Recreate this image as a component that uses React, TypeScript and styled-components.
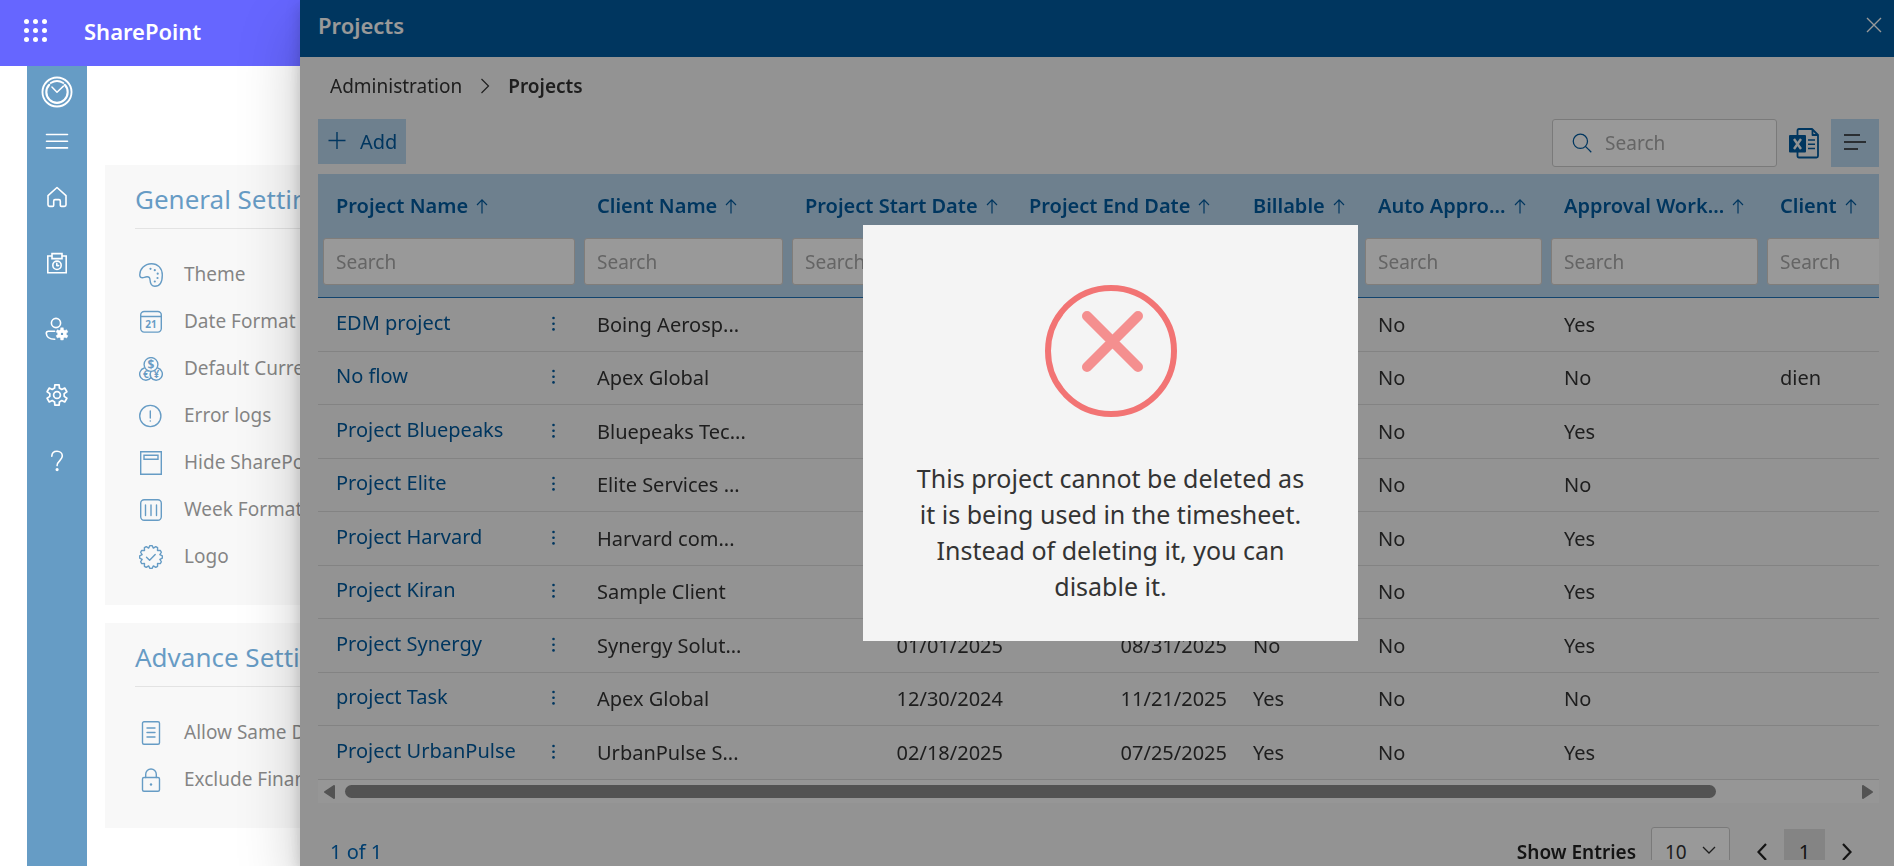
import React, { useState } from "react";
import styled, { createGlobalStyle } from "styled-components";

const blue = "#005a9e";
const paleBlue = "#b8d5ed";

const GlobalStyle = createGlobalStyle`
  *, *::before, *::after { box-sizing: border-box; }
  body {
    margin: 0;
    background: #fff;
    color: #333;
    font-family: "Noto Sans", "Open Sans", sans-serif;
    font-size: 20px;
    line-height: 26px;
    overflow: hidden;
  }
  button, input, select { font: inherit; color: inherit; }
  a { color: inherit; text-decoration: none; }
  h1, h2, p, ul { margin: 0; padding: 0; }
  ul { list-style: none; }
`;

/* ---------- icon helpers ---------- */

const gearPath = (cx: number, cy: number, outer: number, inner: number, teeth: number) => {
  const points: string[] = [];
  const step = (Math.PI * 2) / teeth;
  for (let i = 0; i < teeth; i++) {
    const a = i * step - Math.PI / 2;
    const corners: [number, number][] = [
      [inner, a - step * 0.32],
      [outer, a - step * 0.2],
      [outer, a + step * 0.2],
      [inner, a + step * 0.32],
    ];
    corners.forEach(([r, t]) =>
      points.push(`${(cx + r * Math.cos(t)).toFixed(2)} ${(cy + r * Math.sin(t)).toFixed(2)}`)
    );
  }
  return `M${points.join("L")}Z`;
};

const sealPath = (cx: number, cy: number, outer: number, inner: number, lobes: number) => {
  const at = (r: number, t: number) =>
    `${(cx + r * Math.cos(t)).toFixed(2)} ${(cy + r * Math.sin(t)).toFixed(2)}`;
  const step = (Math.PI * 2) / lobes;
  let d = `M${at(inner, -Math.PI / 2 - step / 2)}`;
  for (let i = 0; i < lobes; i++) {
    const a = i * step - Math.PI / 2;
    d += `L${at(outer, a - step * 0.18)}L${at(outer, a + step * 0.18)}L${at(inner, a + step / 2)}`;
  }
  return `${d}Z`;
};

type IconProps = { size?: number; stroke?: number; children: React.ReactNode };

const Svg = ({ size = 24, stroke = 1.4, children }: IconProps) => (
  <svg
    width={size}
    height={size}
    viewBox="0 0 24 24"
    fill="none"
    stroke="currentColor"
    strokeWidth={stroke}
    strokeLinecap="round"
    strokeLinejoin="round"
    aria-hidden="true"
  >
    {children}
  </svg>
);

const icons = {
  clock: (
    <Svg size={32}>
      <circle cx="12" cy="12" r="10.9" strokeWidth="1.4" />
      <path d="M6.2 6.6a8 8 0 1 0 11.6 0" strokeWidth="1.6" />
      <path d="M7.3 5.3a8.6 8.6 0 0 1 9.4 0" strokeWidth="1.4" />
      <path d="M8.2 8.2 12 12.2l4.8-4.6" strokeWidth="1.1" />
    </Svg>
  ),
  menu: (
    <Svg stroke={1.6}>
      <path d="M1.5 5.5h21M1.5 12.2h21M1.5 18.9h21" />
    </Svg>
  ),
  home: (
    <Svg stroke={1.6}>
      <path d="M3 10.6 12 2.5l9 8.1v9.2c0 1-.6 1.6-1.6 1.6h-3c-.7 0-1.1-.4-1.1-1.1v-4.4c0-.8-.5-1.3-1.3-1.3h-4c-.8 0-1.3.5-1.3 1.3v4.4c0 .7-.4 1.1-1.1 1.1h-3c-1 0-1.6-.6-1.6-1.6z" />
    </Svg>
  ),
  timesheet: (
    <Svg stroke={1.6}>
      <path d="M6.6 5H2.8v16.8h18.400V5h-3.800" strokeLinejoin="miter" />
      <path d="M7 2.600h10v5H7z" strokeLinejoin="miter" />
      <circle cx="12" cy="14.300" r="4.200" />
      <path d="M11.800 12.400v2.200h1.800" />
    </Svg>
  ),
  userSettings: (
    <Svg stroke={1.6}>
      <circle cx="11" cy="6" r="4.600" />
      <path d="M9.600 14.300H3.400c-1.400 0-2.200.9-2.100 2.200.3 3.600 3.400 5.700 8.400 5.700" />
      <path d={gearPath(17, 16.9, 6.2, 4.4, 6)} fill="currentColor" strokeWidth="0.500" />
      <circle cx="17" cy="16.900" r="1.200" fill="#005a9e" stroke="none" />
    </Svg>
  ),
  gear: (
    <Svg stroke={1.7}>
      <path d={gearPath(12, 12, 10.4, 7.3, 6)} />
      <circle cx="12" cy="12" r="3.400" />
    </Svg>
  ),
  help: (
    <Svg stroke={1.6}>
      <path d="M6.800 7.200C6.900 4.200 9 2.300 12 2.300s5.300 1.900 5.300 4.800c0 4.300-5.200 4.700-5.200 9.500" />
      <circle cx="12.100" cy="20.600" r=".8" fill="currentColor" />
    </Svg>
  ),
  palette: (
    <Svg>
      <path d="M.8 12.500C.4 6.500 5.500.7 12.500.7 19 .7 23.300 5.400 23.300 12c0 6.500-2.300 11.300-7.400 11.300-4.200 0-4.700-3.200-4.900-6.600-.1-2.200-1.200-3-3-2.900-2.300.1-3 .900-4.500.900-1.700 0-2.600-.8-2.700-2.200z" />
      <g fill="currentColor" stroke="none">
        <circle cx="11.500" cy="5.800" r="1.100" />
        <circle cx="15.800" cy="7.200" r="1.100" />
        <circle cx="18.700" cy="10.700" r="1.100" />
        <circle cx="18.500" cy="15" r="1.100" />
        <circle cx="15.800" cy="18.500" r="1.100" />
      </g>
    </Svg>
  ),
  calendar: (
    <Svg>
      <rect x="1.700" y="1.500" width="20.600" height="20.600" rx="3.500" />
      <path d="M1.700 6.500h20.600" />
      <text x="12" y="18" fontSize="10" fontWeight="700" textAnchor="middle" fill="currentColor" stroke="none">
        21
      </text>
    </Svg>
  ),
  currency: (
    <Svg>
      <circle cx="12" cy="7.500" r="6.900" />
      <path d="M5.300 11a6.200 6.200 0 1 0 6.700 9.500A6.200 6.200 0 1 0 18.700 11" />
      <path d="M12 20.500c-1.200-2-1.200-4 0-6" />
      <g fill="currentColor" stroke="none" fontWeight="700" textAnchor="middle">
        <text x="12" y="12" fontSize="12">$</text>
        <text x="6.800" y="21" fontSize="10">€</text>
        <text x="17.300" y="21" fontSize="10">¥</text>
      </g>
    </Svg>
  ),
  error: (
    <Svg>
      <circle cx="11.300" cy="12" r="10.600" />
      <path d="M11.300 7v7" />
      <circle cx="11.300" cy="17" r=".8" fill="currentColor" stroke="none" />
    </Svg>
  ),
  header: (
    <Svg>
      <path d="M1.700.800h20.600v22.500H1.700zM5 4.300h14v4H5z" strokeLinejoin="miter" />
    </Svg>
  ),
  week: (
    <Svg>
      <rect x="1.700" y="1.700" width="20.600" height="20.600" rx="3.500" />
      <path d="M6.500 7v10.500M12 7v10.500M17.500 7v10.500" />
    </Svg>
  ),
  seal: (
    <Svg>
      <path d={sealPath(12, 12, 11.4, 9.2, 12)} />
      <path d="m7.500 12.300 3.100 2.900 5.600-5.700" />
    </Svg>
  ),
  page: (
    <Svg>
      <rect x="3.500" y=".700" width="17" height="22.600" rx="1.500" />
      <path d="M8 7h8M8 11.500h8M8 16h8" />
    </Svg>
  ),
  lock: (
    <Svg>
      <rect x="3.500" y="9.500" width="17" height="13.800" rx="1.500" />
      <path d="M6.700 9.500V6.300a5.300 5.300 0 0 1 10.600 0v3.200" />
      <circle cx="12" cy="16.500" r="1.200" fill="currentColor" stroke="none" />
    </Svg>
  ),
};

/* ---------- page behind the panel ---------- */

const Page = styled.div`
  height: 100vh;
  display: flex;
  flex-direction: column;
  overflow: hidden;
`;

const SuiteBar = styled.header`
  height: 66px;
  flex: none;
  display: flex;
  align-items: center;
  gap: 37px;
  padding: 0 24px 4px;
  background: #00f;
  color: #fff;
  font-size: 22px;
  font-weight: 600;
`;

const IconButton = styled.button`
  display: grid;
  place-items: center;
  padding: 0;
  border: 0;
  background: none;
`;

const Workspace = styled.div`
  flex: 1;
  min-height: 0;
  display: flex;
  padding-left: 27px;
`;

const SideNav = styled.nav`
  width: 60px;
  flex: none;
  background: ${blue};
  color: #fff;
  display: flex;
  flex-direction: column;
`;

const NavItem = styled.a<{ $height: number }>`
  height: ${(p) => p.$height}px;
  display: grid;
  place-items: center;
`;

const Settings = styled.main`
  flex: 1;
  min-width: 0;
  padding: 99px 18px 0;
  display: flex;
  flex-direction: column;
  gap: 18px;
`;

const Card = styled.section`
  background: #f4f4f4;
  padding: 0 30px 25px;
`;

const CardTitle = styled.h2`
  height: 64px;
  padding-top: 16px;
  border-bottom: 1px solid #d0d0d0;
  color: ${blue};
  font-size: 26px;
  line-height: 36px;
  font-weight: 400;
  white-space: nowrap;
`;

const CardList = styled.ul`
  padding-top: 22px;
`;

const CardLink = styled.a`
  height: 47px;
  display: flex;
  align-items: center;
  gap: 21px;
  padding-left: 4px;
  white-space: nowrap;
  color: #333;
  font-size: 19px;

  svg { color: ${blue}; }
  span { padding-bottom: 2px; }
`;

const PageVeil = styled.div`
  position: fixed;
  inset: 0;
  background: rgba(255, 255, 255, 0.4);
`;

/* ---------- projects panel ---------- */

const Panel = styled.aside`
  position: fixed;
  inset: 0 0 0 300px;
  display: flex;
  flex-direction: column;
  padding-bottom: 6px;
  background: #f5f5f5;
  box-shadow: 0 26px 58px rgba(0, 0, 0, 0.22), 0 5px 14px rgba(0, 0, 0, 0.18);
`;

const PanelHeader = styled.header`
  height: 57px;
  flex: none;
  display: flex;
  align-items: center;
  justify-content: space-between;
  padding: 0 12px 7px 18px;
  background: ${blue};
  color: #fff;
`;

const PanelTitle = styled.h1`
  font-size: 22px;
  line-height: 28px;
  font-weight: 600;
`;

const PanelBody = styled.div`
  flex: 1;
  min-height: 0;
  overflow: hidden;
  padding: 0 15px 0 18px;
`;

const Breadcrumb = styled.nav`
  height: 62px;
  display: flex;
  align-items: center;
  gap: 15px;
  padding: 0 12px 5px;
  font-size: 19px;

  strong { font-weight: 600; }
`;

const Toolbar = styled.div`
  height: 55px;
  display: flex;
  align-items: flex-start;
  justify-content: space-between;
`;

const ToolGroup = styled.div`
  display: flex;
  align-items: center;
  gap: 12px;
`;

const AddButton = styled.button`
  height: 45px;
  display: flex;
  align-items: center;
  gap: 13px;
  padding: 0 9px;
  border: 0;
  background: ${paleBlue};
  color: ${blue};
`;

const SearchBox = styled.label`
  width: 225px;
  height: 48px;
  display: flex;
  align-items: center;
  gap: 13px;
  padding-left: 19px;
  border: 1px solid #ccc;
  border-radius: 3px;
  background: #fff;
  color: ${blue};
`;

const BareInput = styled.input`
  width: 100%;
  min-width: 0;
  padding: 0;
  border: 0;
  outline: 0;
  background: none;
  font-size: 19px;

  &::placeholder { color: #a8a8a8; opacity: 1; }
`;

const ListButton = styled(IconButton)`
  width: 48px;
  height: 48px;
  background: ${paleBlue};
  color: #222;
`;

const GridViewport = styled.div`
  overflow: hidden;
`;

const Grid = styled.table`
  width: 1786px;
  table-layout: fixed;
  border-collapse: separate;
  border-spacing: 0;
`;

const HeadCell = styled.th`
  height: 124px;
  padding: 18px 4px 0 5px;
  vertical-align: top;
  background: ${paleBlue};
  border-bottom: 1px solid #1e72b8;
  text-align: left;
  color: ${blue};
  font-weight: 600;
`;

const SortButton = styled.button`
  display: flex;
  align-items: center;
  gap: 8px;
  padding: 0 0 0 13px;
  border: 0;
  background: none;
  font-weight: 600;
  line-height: 28px;
  white-space: nowrap;

  svg { flex: none; }
`;

const FilterInput = styled.input`
  width: 100%;
  height: 47px;
  margin-top: 18px;
  padding: 0 12px;
  display: block;
  border: 1px solid #d5d0cc;
  border-radius: 3px;
  background: #fff;
  font-size: 19px;
  font-weight: 400;

  &::placeholder { color: #a8a8a8; opacity: 1; }
`;

const BodyRow = styled.tr`
  height: 54px;
  &:nth-child(even) { height: 53px; }
`;

const Cell = styled.td<{ $end?: boolean }>`
  padding: ${(p) => (p.$end ? "0 8px 0 18px" : "0 18px")};
  border-bottom: 1px solid #dadada;
  text-align: ${(p) => (p.$end ? "right" : "left")};
  white-space: nowrap;
  overflow: hidden;
`;

const NameCell = styled.div`
  display: flex;
  align-items: center;
  justify-content: space-between;
  padding-bottom: 4px;
  color: ${blue};
`;

const ScrollTrack = styled.div`
  height: 23px;
  display: flex;
  align-items: center;
  gap: 9px;
  padding: 0 6px;
  background: #fbfbfb;
  color: #8a8a8a;
`;

const ScrollLane = styled.div`
  flex: 1;
`;

const ScrollThumb = styled.div`
  width: 91%;
  height: 13px;
  border-radius: 7px;
  background: #8a8a8a;
`;

const Footer = styled.footer`
  display: flex;
  align-items: flex-start;
  justify-content: space-between;
  padding: 24px 20px 0 12px;
`;

const PageCount = styled.span`
  padding-top: 12px;
  color: #0067b8;
`;

const Pager = styled.div`
  display: flex;
  align-items: center;
  height: 50px;
  color: #222;
`;

const EntriesLabel = styled.label`
  display: flex;
  align-items: center;
  gap: 15px;
  font-size: 19px;
  font-weight: 600;
`;

const SelectWrap = styled.span`
  position: relative;
  color: #333;
  font-weight: 400;

  svg {
    position: absolute;
    right: 14px;
    top: 16px;
    pointer-events: none;
  }
`;

const EntriesSelect = styled.select`
  width: 79px;
  height: 50px;
  padding: 0 13px;
  appearance: none;
  border: 1px solid #ccc;
  border-radius: 3px;
  background: #fff;
`;

const PagerArrow = styled(IconButton)`
  width: 24px;
  height: 40px;
`;

const CurrentPage = styled.button`
  width: 41px;
  height: 46px;
  padding: 0;
  border: 0;
  margin: 0 10px;
  background: #dcdcdc;
`;

const PagerArrows = styled.div`
  display: flex;
  align-items: center;
  padding-left: 20px;
`;

/* ---------- dialog ---------- */

const DialogLayer = styled.div`
  position: absolute;
  inset: 0;
  display: flex;
  align-items: center;
  justify-content: center;
  padding-left: 27px;
  background: rgba(0, 0, 0, 0.4);
`;

const Dialog = styled.div`
  width: 495px;
  display: flex;
  flex-direction: column;
  align-items: center;
  gap: 43px;
  padding: 60px 46px 37px;
  background: #f4f4f4;
`;

const DialogText = styled.p`
  font-size: 25px;
  line-height: 36px;
  text-align: center;
`;

/* ---------- data ---------- */

type IconName = keyof typeof icons;

const generalItems: [IconName, string][] = [
  ["palette", "Theme"],
  ["calendar", "Date Format"],
  ["currency", "Default Currency"],
  ["error", "Error logs"],
  ["header", "Hide SharePoint Header"],
  ["week", "Week Format"],
  ["seal", "Logo"],
];

const advanceItems: [IconName, string][] = [
  ["page", "Allow Same Day Entries"],
  ["lock", "Exclude Financial Year"],
];

const navItems: [IconName, string, number][] = [
  ["clock", "Timesheet home", 52],
  ["menu", "Menu", 46],
  ["home", "Home", 66],
  ["timesheet", "Timesheet", 66],
  ["userSettings", "Users", 66],
  ["gear", "Settings", 66],
  ["help", "Help", 66],
];

const columns: { label: string; width: number }[] = [
  { label: "Project Name", width: 261 },
  { label: "Client Name", width: 208 },
  { label: "Project Start Date", width: 224 },
  { label: "Project End Date", width: 224 },
  { label: "Billable", width: 125 },
  { label: "Auto Appro...", width: 186 },
  { label: "Approval Work...", width: 216 },
  { label: "Client", width: 342 },
];

const projects = [
  ["EDM project", "Boing Aerosp...", "", "", "", "No", "Yes", ""],
  ["No flow", "Apex Global", "", "", "", "No", "No", "dien"],
  ["Project Bluepeaks", "Bluepeaks Tec...", "", "", "", "No", "Yes", ""],
  ["Project Elite", "Elite Services ...", "", "", "", "No", "No", ""],
  ["Project Harvard", "Harvard com...", "", "", "", "No", "Yes", ""],
  ["Project Kiran", "Sample Client", "", "", "", "No", "Yes", ""],
  ["Project Synergy", "Synergy Solut...", "01/01/2025", "08/31/2025", "No", "No", "Yes", ""],
  ["project Task", "Apex Global", "12/30/2024", "11/21/2025", "Yes", "No", "No", ""],
  ["Project UrbanPulse", "UrbanPulse S...", "02/18/2025", "07/25/2025", "Yes", "No", "Yes", ""],
];

/* ---------- parts ---------- */

const SettingsCard = ({ title, items }: { title: string; items: [IconName, string][] }) => (
  <Card>
    <CardTitle>{title}</CardTitle>
    <CardList>
      {items.map(([icon, label]) => (
        <li key={label}>
          <CardLink href="#">
            {icons[icon]}
            <span>{label}</span>
          </CardLink>
        </li>
      ))}
    </CardList>
  </Card>
);

const SortArrow = () => (
  <svg width="12" height="16" viewBox="0 0 12 16" fill="none" stroke="currentColor" strokeWidth="1.2" aria-hidden="true">
    <path d="M6 15.500V2M1 7 6 1.800l5 5.200" />
  </svg>
);

const ExcelIcon = () => (
  <svg width="30" height="32" viewBox="0 0 30 32" fill="none" stroke={blue} strokeWidth="1.800" strokeLinejoin="round" aria-hidden="true">
    <path d="M8.500 8V3.500c0-1 .5-1.500 1.500-1.500h13L29 8v21c0 1-.5 1.500-1.500 1.500H10c-1 0-1.500-.5-1.500-1.500v-4" />
    <path d="M23.500 2.500V8H29" />
    <rect x="0" y="8" width="17" height="17.500" rx="1" fill={blue} stroke="none" />
    <path d="M5 12l7 10M12 12 5 22" stroke="#f5f5f5" strokeWidth="2.400" />
    <path d="M19 13h7M19 17.300h7M19 21.600h7" strokeWidth="1.500" />
  </svg>
);

const ProjectGrid = () => (
  <GridViewport>
    <Grid>
      <colgroup>
        {columns.map((c) => (
          <col key={c.label} width={c.width} />
        ))}
      </colgroup>
      <thead>
        <tr>
          {columns.map((c) => (
            <HeadCell key={c.label} scope="col">
              <SortButton type="button">
                {c.label}
                <SortArrow />
              </SortButton>
              <FilterInput type="text" placeholder="Search" aria-label={`Search ${c.label}`} />
            </HeadCell>
          ))}
        </tr>
      </thead>
      <tbody>
        {projects.map(([name, ...rest]) => (
          <BodyRow key={name}>
            <Cell>
              <NameCell>
                <a href="#">{name}</a>
                <IconButton type="button" aria-label={`Actions for ${name}`}>
                  <svg width="16" height="16" viewBox="0 0 16 16" fill="currentColor" aria-hidden="true">
                    <circle cx="8.500" cy="3" r="1.300" />
                    <circle cx="8.500" cy="8.700" r="1.300" />
                    <circle cx="8.500" cy="14.400" r="1.300" />
                  </svg>
                </IconButton>
              </NameCell>
            </Cell>
            {rest.map((value, i) => (
              <Cell key={i} $end={i === 1 || i === 2}>
                {value}
              </Cell>
            ))}
          </BodyRow>
        ))}
      </tbody>
    </Grid>
  </GridViewport>
);

export default function App() {
  const [entries, setEntries] = useState("10");

  return (
    <>
      <GlobalStyle />
      <Page>
        <SuiteBar>
          <IconButton type="button" aria-label="App launcher">
            <svg width="23" height="24" viewBox="0 0 23 24" fill="#fff" aria-hidden="true">
              {[2.5, 11.5, 20.5].map((y) =>
                [2.5, 11.5, 20.5].map((x) => <circle key={`${x}-${y}`} cx={x} cy={y} r="2.500" />)
              )}
            </svg>
          </IconButton>
          SharePoint
        </SuiteBar>
        <Workspace>
          <SideNav aria-label="Timesheet">
            {navItems.map(([icon, label, height]) => (
              <NavItem key={icon} href="#" aria-label={label} $height={height}>
                {icons[icon]}
              </NavItem>
            ))}
          </SideNav>
          <Settings>
            <SettingsCard title="General Settings" items={generalItems} />
            <SettingsCard title="Advance Settings" items={advanceItems} />
          </Settings>
        </Workspace>
      </Page>
      <PageVeil />

      <Panel>
        <PanelHeader>
          <PanelTitle>Projects</PanelTitle>
          <IconButton type="button" aria-label="Close">
            <svg width="16" height="16" viewBox="0 0 16 16" fill="none" stroke="#fff" strokeWidth="1.400" aria-hidden="true">
              <path d="M1 1l14 14M15 1 1 15" />
            </svg>
          </IconButton>
        </PanelHeader>
        <PanelBody>
          <Breadcrumb aria-label="Breadcrumb">
            <a href="#">Administration</a>
            <svg width="16" height="16" viewBox="0 0 16 16" fill="none" stroke="currentColor" strokeWidth="1.200" aria-hidden="true">
              <path d="M4.500 1 11.500 8l-7 7" />
            </svg>
            <strong>Projects</strong>
          </Breadcrumb>
          <Toolbar>
            <AddButton type="button">
              <svg width="20" height="22" viewBox="0 0 20 22" fill="none" stroke="currentColor" strokeWidth="1.400" aria-hidden="true">
                <path d="M10 1v17M1.500 9.500h17" />
              </svg>
              Add
            </AddButton>
            <ToolGroup>
              <SearchBox>
                <svg width="24" height="24" viewBox="0 0 24 24" fill="none" stroke="currentColor" strokeWidth="1.500" aria-hidden="true">
                  <circle cx="10" cy="10" r="8.500" />
                  <path d="M16 16 23 23" />
                </svg>
                <BareInput type="text" placeholder="Search" aria-label="Search projects" />
              </SearchBox>
              <IconButton type="button" aria-label="Export to Excel">
                <ExcelIcon />
              </IconButton>
              <ListButton type="button" aria-label="List options">
                <svg width="22" height="18" viewBox="0 0 22 18" fill="none" stroke="currentColor" strokeWidth="1.400" aria-hidden="true">
                  <path d="M0 1h16M0 8h22M0 15h14" />
                </svg>
              </ListButton>
            </ToolGroup>
          </Toolbar>
          <ProjectGrid />
          <ScrollTrack>
            <svg width="12" height="14" viewBox="0 0 12 14" fill="currentColor" stroke="currentColor" strokeWidth="2" strokeLinejoin="round" aria-hidden="true">
              <path d="M10 1v12L1 7z" />
            </svg>
            <ScrollLane>
              <ScrollThumb />
            </ScrollLane>
            <svg width="12" height="14" viewBox="0 0 12 14" fill="currentColor" stroke="currentColor" strokeWidth="2" strokeLinejoin="round" aria-hidden="true">
              <path d="M2 1v12l9-6z" />
            </svg>
          </ScrollTrack>
          <Footer>
            <PageCount>1 of 1</PageCount>
            <Pager>
              <EntriesLabel>
                Show Entries
                <SelectWrap>
                  <EntriesSelect value={entries} onChange={(e) => setEntries(e.target.value)}>
                    <option>10</option>
                    <option>20</option>
                    <option>50</option>
                  </EntriesSelect>
                  <svg width="14" height="14" viewBox="0 0 14 14" fill="none" stroke="currentColor" strokeWidth="1.300" aria-hidden="true">
                    <path d="M1 4l6 6 6-6" />
                  </svg>
                </SelectWrap>
              </EntriesLabel>
              <PagerArrows>
                <PagerArrow type="button" aria-label="Previous page">
                  <svg width="10" height="18" viewBox="0 0 10 18" fill="none" stroke="currentColor" strokeWidth="2.200" aria-hidden="true">
                    <path d="M9 1 1.500 9 9 17" />
                  </svg>
                </PagerArrow>
                <CurrentPage type="button">1</CurrentPage>
                <PagerArrow type="button" aria-label="Next page">
                  <svg width="10" height="18" viewBox="0 0 10 18" fill="none" stroke="currentColor" strokeWidth="2.200" aria-hidden="true">
                    <path d="M1 1l7.500 8L1 17" />
                  </svg>
                </PagerArrow>
              </PagerArrows>
            </Pager>
          </Footer>
        </PanelBody>

        <DialogLayer>
          <Dialog role="alertdialog" aria-describedby="delete-message">
            <svg width="132" height="132" viewBox="0 0 132 132" fill="none" aria-hidden="true">
              <circle cx="66" cy="66" r="63" stroke="#f27474" strokeWidth="6" />
              <path d="M42 31l51 51M93 31 42 82" stroke="#f48f8f" strokeWidth="10" strokeLinecap="round" />
            </svg>
            <DialogText id="delete-message">
              This project cannot be deleted as it is being used in the timesheet. Instead of deleting it, you can
              disable it.
            </DialogText>
          </Dialog>
        </DialogLayer>
      </Panel>
    </>
  );
}
